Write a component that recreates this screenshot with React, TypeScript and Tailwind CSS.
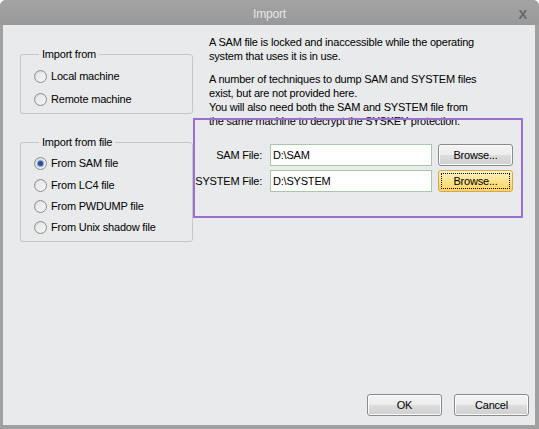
import React from "react";

const font = { fontFamily: '"Liberation Sans", Arial, sans-serif', letterSpacing: "-0.2px" };

function Radio({ label, checked, h = "h-[21px]" }: { label: string; checked?: boolean; h?: string }) {
  return (
    <div className={`flex items-center ${h}`}>
      <span className="relative w-[13px] h-[13px] rounded-full border border-[#8e8f8f] bg-gradient-to-br from-[#d4d4d4] to-[#fbfbfb] flex items-center justify-center">
        <span className="w-[9px] h-[9px] rounded-full bg-gradient-to-br from-[#e6e6e6] to-[#f4f4f4] flex items-center justify-center">
          {checked && <span className="w-[5px] h-[5px] rounded-full bg-[#2f4f8f] shadow-[0_0_1px_1px_#7f9cd0]" />}
        </span>
      </span>
      <span className="ml-[4px] text-[11px] text-black">{label}</span>
    </div>
  );
}

function Group({ title, children, h }: { title: string; children: React.ReactNode; h: string }) {
  return (
    <fieldset className={`border border-[#c7c7c7] rounded-[3px] px-[13px] ${h}`}>
      <legend className="ml-[5px] px-[3px] text-[11px] text-black leading-[13px]">{title}</legend>
      {children}
    </fieldset>
  );
}

function Btn({ label, focused, w = "w-[75px]" }: { label: string; focused?: boolean; w?: string }) {
  if (focused) {
    return (
      <div className={`${w} h-[22px] rounded-[3px] border border-[#d8a747] bg-gradient-to-b from-[#fef3c5] via-[#fde38c] to-[#fcd35f] p-[2px]`}>
        <div className="w-full h-full border border-dotted border-black flex items-center justify-center text-[11px] text-black">{label}</div>
      </div>
    );
  }
  return (
    <div className={`${w} h-[22px] rounded-[3px] border border-[#8b8b8b] bg-[linear-gradient(#f4f4f4_0%,#ececec_50%,#dddddd_51%,#cfcfcf_100%)] flex items-center justify-center text-[11px] text-black shadow-[inset_0_0_0_1px_#fbfbfb]`}>
      {label}
    </div>
  );
}

function FileRow({ label, value, focused }: { label: string; value: string; focused?: boolean }) {
  return (
    <div className="flex items-center h-[22px]">
      <div className="w-[67px] text-right text-[11px] text-black whitespace-nowrap flex justify-end">{label}</div>
      <div className="ml-[8px] w-[162px] h-[22px] border border-[#a9c7a9] bg-white flex items-center pl-[2px] text-[11px] text-black">{value}</div>
      <div className="ml-[6px]"><Btn label="Browse..." focused={focused} /></div>
    </div>
  );
}

export default function App() {
  return (
    <div style={font} className="w-[539px] h-[429px] flex flex-col bg-[#a0a0a0] rounded-t-[6px] overflow-hidden">
      <div className="relative h-[25px] flex items-center justify-center bg-gradient-to-b from-[#a3a3a3] to-[#999999]">
        <span className="text-[12px] text-[#e6e6e6] mt-[2px]">Import</span>
        <span className="absolute right-[12px] top-[5px] text-[13px] font-bold text-[#666666]">X</span>
      </div>
      <div className="ml-[3px] mr-[4px] mb-[4px] flex-1 bg-[#e9eaec] flex flex-col">
        <div className="flex">
          <div className="ml-[17px] w-[173px] pt-[23px] flex flex-col gap-[22px]">
            <Group title="Import from" h="h-[66px]">
              <div className="pt-[5px]">
                <Radio label="Local machine" />
                <Radio label="Remote machine" h="h-[25px]" />
              </div>
            </Group>
            <Group title="Import from file" h="h-[106px]">
              <div className="pt-[4px]">
                <Radio label="From SAM file" checked />
                <Radio label="From LC4 file" h="h-[22px]" />
                <Radio label="From PWDUMP file" />
                <Radio label="From Unix shadow file" />
              </div>
            </Group>
          </div>
          <div className="w-[330px] pt-[10px] flex flex-col">
            <div className="pl-[16px] text-[11px] leading-[14px] text-black">
              <p>A SAM file is locked and inaccessible while the operating<br />system that uses it is in use.</p>
              <p className="mt-[9px]">A number of techniques to dump SAM and SYSTEM files<br />exist, but are not provided here.<br />You will also need both the SAM and SYSTEM file from<br />the same machine to decrypt the SYSKEY protection.</p>
            </div>
            <div className="-mt-[10px] h-[100px] border-2 border-[#9b70cf] pt-[24px] flex flex-col gap-[4px] relative">
              <FileRow label="SAM File:" value="D:\SAM" />
              <FileRow label="SYSTEM File:" value="D:\SYSTEM" focused />
            </div>
          </div>
        </div>
        <div className="mt-auto mb-[9px] mr-[6px] flex justify-end gap-[12px]">
          <Btn label="OK" />
          <Btn label="Cancel" />
        </div>
      </div>
    </div>
  );
}
